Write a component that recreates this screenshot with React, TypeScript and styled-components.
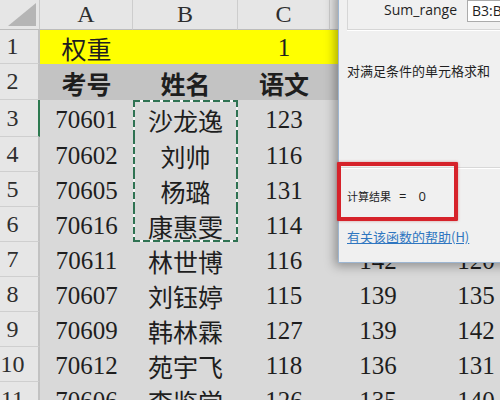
import { Fragment } from 'react';
import styled, { createGlobalStyle } from 'styled-components';

const GlobalStyle = createGlobalStyle`
    html, body {
        margin: 0;
        padding: 0;
    }
    body {
        width: 500px;
        height: 400px;
        overflow: hidden;
        background: #d9d9d9;
    }
`;

type Tone = 'yellow' | 'head' | 'body';
type Ants = 'top' | 'mid' | 'bottom';

interface CellProps {
    $tone?: Tone;
    $bold?: boolean;
    $ants?: Ants;
}

interface RowHeadProps {
    $active?: boolean;
}

const toneColor: Record<Tone, string> = {
    yellow: '#ffff00',
    head: '#c3c3c3',
    body: '#d9d9d9',
};

// copy marquee (marching ants) drawn as dashed edges
const antsH = 'repeating-linear-gradient(90deg, #2f7252 0 7px, #f4f4f4 7px 10px)';
const antsV = 'repeating-linear-gradient(180deg, #2f7252 0 7px, #f4f4f4 7px 10px)';

const antsLayers = (ants?: Ants) => {
    if (!ants) return '';
    const layers = [
        `${antsV} left / 2px 100% no-repeat`,
        `${antsV} right / 2px 100% no-repeat`,
    ];
    if (ants === 'top') layers.push(`${antsH} top / 100% 2px no-repeat`);
    if (ants === 'bottom') layers.push(`${antsH} bottom / 100% 2px no-repeat`);
    return layers.join(', ') + ',';
};

const Page = styled.div`
    position: relative;
    width: 500px;
    height: 400px;
    overflow: hidden;
    background: #d9d9d9;
`;

const Sheet = styled.div`
    display: grid;
    grid-template-columns: 40px 93px 105px 92px 96px 100px;
    grid-template-rows: 30px 34px 36px 37px 35px 35px 35px 35px 35px 35px 35px 35px;
    font-family: "Liberation Serif", "Noto Sans CJK SC", serif;
    color: #1e1e1e;
`;

const Corner = styled.div`
    background: #e6e6e6;
    border-right: 1px solid #c9c9c9;
    border-bottom: 1px solid #bcbcbc;
    display: flex;
    align-items: flex-end;
    justify-content: flex-end;
    padding: 0 3px 3px 0;
`;

const ColHead = styled.div`
    background: #e6e6e6;
    border-right: 1px solid #cdcdcd;
    border-bottom: 1px solid #bcbcbc;
    display: flex;
    align-items: center;
    justify-content: center;
    font-size: 24px;
    color: #2e2e2e;
    padding-bottom: 1px;
`;

const RowHead = styled.div<RowHeadProps>`
    background: #e6e6e6;
    border-bottom: 1px solid #cfcfcf;
    border-right: 2px solid ${props => props.$active ? '#2d7a50' : '#c2c2c2'};
    display: flex;
    align-items: center;
    justify-content: center;
    padding-right: 13px;
    font-size: 24px;
    color: #2e2e2e;
`;

const Cell = styled.div<CellProps>`
    background: ${props => antsLayers(props.$ants)} ${props => toneColor[props.$tone || 'body']};
    display: flex;
    align-items: center;
    justify-content: center;
    font-size: 25px;
    font-weight: ${props => props.$bold ? 700 : 400};
    white-space: nowrap;
    padding-top: 2px;
`;

const Dialog = styled.div`
    position: absolute;
    left: 338px;
    top: -12px;
    width: 176px;
    height: 275px;
    box-sizing: border-box;
    background: #f0f0f0;
    border: 1px solid #9db6d2;
    box-shadow: -3px 3px 10px rgba(0, 0, 0, 0.35);
    display: flex;
    flex-direction: column;
    font-family: "Noto Sans CJK SC", "Open Sans", sans-serif;
    color: #1f1f1f;
`;

const GroupBox = styled.div`
    margin-left: 8px;
    height: 41px;
    box-sizing: border-box;
    padding-top: 11px;
    border-left: 1px solid #d6d6d6;
    border-bottom: 1px solid #d6d6d6;
    box-shadow: 0 1px 0 #ffffff;
    display: flex;
    justify-content: flex-end;
    align-items: flex-start;
`;

const RangeLabel = styled.div`
    font-family: "Open Sans", sans-serif;
    font-size: 14px;
    line-height: 20px;
    margin-right: 10px;
`;

const RangeInput = styled.div`
    width: 46px;
    height: 22px;
    box-sizing: border-box;
    background: #ffffff;
    border: 1px solid #ababab;
    border-right: none;
    padding-left: 4px;
    font-family: "Open Sans", sans-serif;
    font-size: 14px;
    line-height: 19px;
    white-space: nowrap;
    overflow: hidden;
`;

const Description = styled.div`
    margin: 33px 0 0 8px;
    font-size: 13px;
    line-height: 16px;
`;

const Separator = styled.div`
    margin-top: 88px;
    height: 1px;
    background: #d8d8d8;
    box-shadow: 0 1px 0 #ffffff;
`;

const Result = styled.div`
    margin: 20px 0 0 8px;
    font-size: 11px;
    line-height: 16px;
    display: flex;
    align-items: center;
`;

const ResultPart = styled.span<{ $gap: number }>`
    font-family: "Open Sans", sans-serif;
    font-size: 13px;
    margin-left: ${props => props.$gap}px;
`;

const HelpLink = styled.a`
    margin: 25px 0 0 8px;
    font-size: 13px;
    line-height: 16px;
    color: #2f76c0;
    text-decoration: underline;
    cursor: pointer;
`;

const Highlight = styled.div`
    position: absolute;
    left: 337px;
    top: 162px;
    width: 121px;
    height: 59px;
    box-sizing: border-box;
    border: 4px solid #d6222a;
    border-radius: 1px;
    box-shadow: 0 0 3px rgba(150, 0, 0, 0.35);
    pointer-events: none;
`;

const columns = ['A', 'B', 'C', 'D', 'E'];

const students = [
    { id: '70601', name: '沙龙逸', c: '123', d: '135', e: '138' },
    { id: '70602', name: '刘帅', c: '116', d: '143', e: '140' },
    { id: '70605', name: '杨璐', c: '131', d: '136', e: '142' },
    { id: '70616', name: '康惠雯', c: '114', d: '138', e: '131' },
    { id: '70611', name: '林世博', c: '116', d: '142', e: '120' },
    { id: '70607', name: '刘钰婷', c: '115', d: '139', e: '135' },
    { id: '70609', name: '韩林霖', c: '127', d: '139', e: '142' },
    { id: '70612', name: '苑宇飞', c: '118', d: '136', e: '131' },
    { id: '70606', name: '李鉴学', c: '126', d: '135', e: '140' },
];

// rows 3..6 of column B are inside the copy marquee
const antsFor = (i: number): Ants | undefined => {
    if (i === 0) return 'top';
    if (i === 3) return 'bottom';
    if (i < 3) return 'mid';
    return undefined;
};

const App = () => {
    return (
        <>
            <GlobalStyle />
            <Page>
                <Sheet>
                    <Corner>
                        <svg width="28" height="23" viewBox="0 0 28 23">
                            <polygon points="28,0 28,23 0,23" fill="#b5b5b5" />
                        </svg>
                    </Corner>
                    {columns.map(col => (
                        <ColHead key={col}>{col}</ColHead>
                    ))}

                    <RowHead>1</RowHead>
                    <Cell $tone="yellow">权重</Cell>
                    <Cell $tone="yellow" />
                    <Cell $tone="yellow">1</Cell>
                    <Cell $tone="yellow">1</Cell>
                    <Cell $tone="yellow">1</Cell>

                    <RowHead>2</RowHead>
                    <Cell $tone="head" $bold>考号</Cell>
                    <Cell $tone="head" $bold>姓名</Cell>
                    <Cell $tone="head" $bold>语文</Cell>
                    <Cell $tone="head" $bold>数学</Cell>
                    <Cell $tone="head" $bold>英语</Cell>

                    {students.map((s, i) => (
                        <Fragment key={s.id}>
                            <RowHead $active={i === 0}>{i + 3}</RowHead>
                            <Cell>{s.id}</Cell>
                            <Cell $ants={antsFor(i)}>{s.name}</Cell>
                            <Cell>{s.c}</Cell>
                            <Cell>{s.d}</Cell>
                            <Cell>{s.e}</Cell>
                        </Fragment>
                    ))}
                </Sheet>

                <Dialog>
                    <GroupBox>
                        <RangeLabel>Sum_range</RangeLabel>
                        <RangeInput>B3:B6</RangeInput>
                    </GroupBox>
                    <Description>对满足条件的单元格求和</Description>
                    <Separator />
                    <Result>
                        计算结果
                        <ResultPart $gap={8}>=</ResultPart>
                        <ResultPart $gap={12}>0</ResultPart>
                    </Result>
                    <HelpLink>有关该函数的帮助(H)</HelpLink>
                </Dialog>

                <Highlight />
            </Page>
        </>
    );
};

export default App;
